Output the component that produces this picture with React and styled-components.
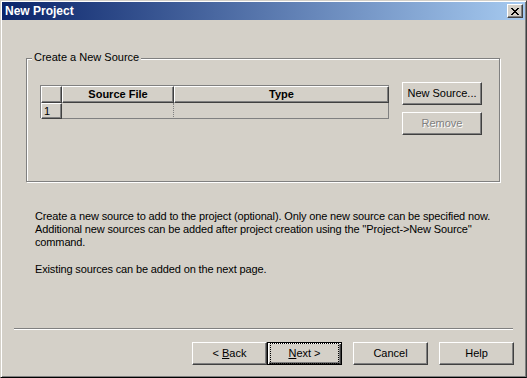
import React from "react";
import styled, { createGlobalStyle, css } from "styled-components";

const Global = createGlobalStyle`
  html, body { margin: 0; padding: 0; background: #d4d0c8; }
  body { font-family: "Liberation Sans", Arial, sans-serif; font-size: 11px; color: #000; }
  * { box-sizing: border-box; }
`;

const Face = "#d4d0c8";

const Window = styled.div`
  width: 527px;
  height: 378px;
  background: ${Face};
  border: 1px solid;
  border-color: ${Face} #404040 #000000 ${Face};
  box-shadow: inset 1px 1px #ffffff, inset -1px -1px #808080;
  padding: 1px;
  display: flex;
  flex-direction: column;
`;

const TitleBar = styled.div`
  height: 18px;
  flex: none;
  display: flex;
  align-items: center;
  justify-content: space-between;
  padding: 0 2px 0 3px;
  background: linear-gradient(to right, #0a246a, #a6caf0);
`;

const TitleText = styled.span`
  color: #fff;
  font-weight: bold;
  font-size: 12px;
  line-height: 14px;
`;

const raised = css`
  background: ${Face};
  border: 1px solid;
  border-color: #ffffff #404040 #404040 #ffffff;
  box-shadow: inset -1px -1px #808080;
`;

const CloseButton = styled.div`
  ${raised};
  width: 16px;
  height: 14px;
  display: flex;
  align-items: center;
  justify-content: center;
  padding-right: 1px;
`;

const Content = styled.div`
  flex: 1;
  display: flex;
  flex-direction: column;
`;

const GroupBox = styled.div`
  position: relative;
  margin: 38px 0 0 24px;
  width: 474px;
  height: 124px;
  border: 1px solid #808080;
  box-shadow: inset 1px 1px #ffffff, 1px 1px #ffffff;
  padding: 23px 0 0 13px;
  display: flex;
  gap: 13px;
`;

const GroupLabel = styled.span`
  position: absolute;
  top: -8px;
  left: 5px;
  padding: 0 2px;
  background: ${Face};
  line-height: 13px;
`;

const Grid = styled.div`
  margin-top: 3px;
  width: 349px;
  height: 33px;
  display: grid;
  grid-template-columns: 21px 112px 1fr;
  grid-template-rows: 17px 16px;
  border-top: 1px solid #808080;
  border-left: 1px solid #808080;
`;

const HeadCell = styled.div`
  ${raised};
  display: flex;
  align-items: center;
  justify-content: ${(p) => (p.$left ? "flex-start" : "center")};
  padding-left: ${(p) => (p.$left ? "2px" : "0")};
  font-weight: ${(p) => (p.$bold ? "bold" : "normal")};
  line-height: 13px;
`;

const Cell = styled.div`
  background: ${Face};
  border-right: 1px dotted #808080;
  border-bottom: 1px solid #808080;
  ${(p) => p.$last && css`border-right: 1px solid #808080;`}
`;

const ButtonColumn = styled.div`
  display: flex;
  flex-direction: column;
  gap: 7px;
`;

const Button = styled.div`
  ${raised};
  width: ${(p) => p.$w || 75}px;
  height: 23px;
  display: flex;
  align-items: center;
  justify-content: center;
  line-height: 13px;
  white-space: pre;
  ${(p) =>
    p.$disabled &&
    css`
      color: #808080;
      text-shadow: 1px 1px #ffffff;
    `}
  ${(p) =>
    p.$default &&
    css`
      border: 1px solid #000;
      box-shadow: inset 1px 1px #ffffff, inset -1px -1px #404040, inset -2px -2px #808080;
    `}
`;

const Focus = styled.span`
  display: flex;
  align-items: center;
  justify-content: center;
  width: 100%;
  height: 100%;
  margin: 2px;
  border: 1px dotted #000;
`;

const Description = styled.div`
  margin: 28px 0 0 33px;
  line-height: 13px;
  letter-spacing: -0.14px;
  display: flex;
  flex-direction: column;
  gap: 14px;
`;

const Para = styled.p`
  margin: 0;
  white-space: nowrap;
`;

const Separator = styled.div`
  margin: auto 12px 12px 12px;
  height: 2px;
  border-top: 1px solid #808080;
  border-bottom: 1px solid #ffffff;
`;

const ButtonRow = styled.div`
  display: flex;
  justify-content: flex-end;
  padding: 0 11px 11px 0;
`;

const Group = styled.div`
  display: flex;
  margin-right: 11px;
`;

export default function App() {
  return (
    <>
      <Global />
      <Window>
        <TitleBar>
          <TitleText>New Project</TitleText>
          <CloseButton>
            <svg width="8" height="7" viewBox="0 0 8 7" shapeRendering="crispEdges">
              <path d="M0 0h2v1H0zM6 0h2v1H6zM1 1h2v1H1zM5 1h2v1H5zM2 2h4v1H2zM3 3h2v1H3zM2 4h4v1H2zM1 5h2v1H1zM5 5h2v1H5zM0 6h2v1H0zM6 6h2v1H6z" fill="#000" />
            </svg>
          </CloseButton>
        </TitleBar>
        <Content>
          <GroupBox>
            <GroupLabel>Create a New Source</GroupLabel>
            <Grid>
              <HeadCell />
              <HeadCell $bold>Source File</HeadCell>
              <HeadCell $bold>Type</HeadCell>
              <HeadCell $left>1</HeadCell>
              <Cell />
              <Cell $last />
            </Grid>
            <ButtonColumn>
              <Button $w={80}>New Source...</Button>
              <Button $w={80} $disabled>Remove</Button>
            </ButtonColumn>
          </GroupBox>
          <Description>
            <Para>
              Create a new source to add to the project (optional). Only one new source can be specified now.
              <br />
              Additional new sources can be added after project creation using the ''Project-&gt;New Source''
              <br />
              command.
            </Para>
            <Para>Existing sources can be added on the next page.</Para>
          </Description>
          <Separator />
          <ButtonRow>
            <Group>
              <Button>
                {"< "}
                <u>B</u>
                {"ack"}
              </Button>
              <Button $default>
                <Focus>
                  <u>N</u>
                  {"ext >"}
                </Focus>
              </Button>
            </Group>
            <Group>
              <Button>Cancel</Button>
            </Group>
            <Button>Help</Button>
          </ButtonRow>
        </Content>
      </Window>
    </>
  );
}
